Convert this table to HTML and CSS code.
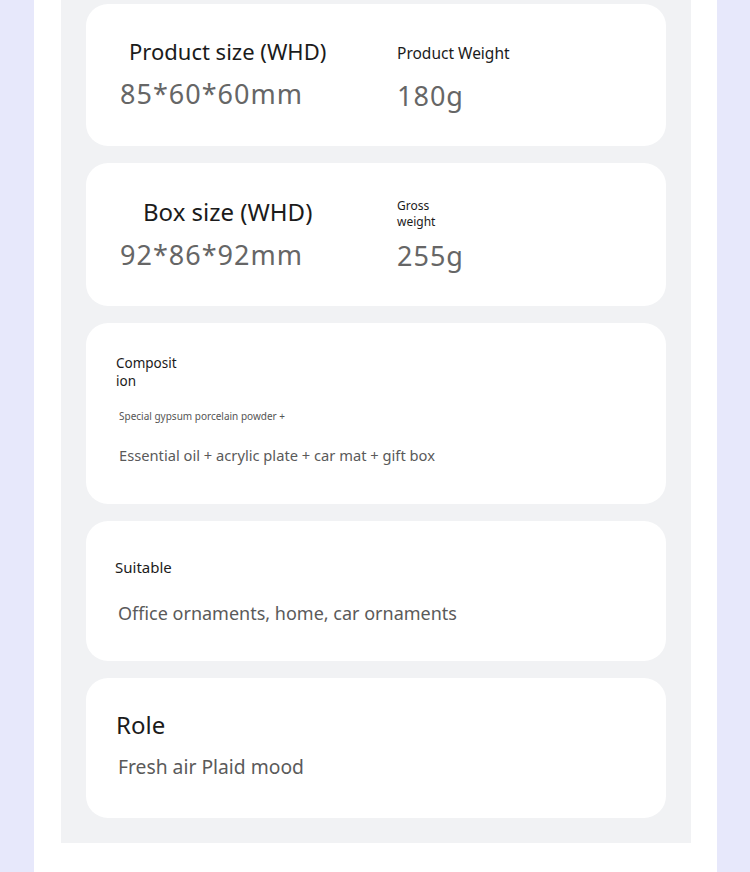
FILE: index.html
```html
<!DOCTYPE html>
<html lang="en">
<head>
    <meta charset="UTF-8">
    <title>Product details</title>
    <meta name="viewport" content="width=device-width, initial-scale=1">
    <link rel="stylesheet" href="styles.css">
</head>
<body>
<div class="page">
    <div class="panel">
        <section class="card card-size">
            <div class="col col-main">
                <h3 class="title title-product">Product size (WHD)</h3>
                <p class="value">85*60*60mm</p>
            </div>
            <div class="col col-side">
                <h4 class="label label-weight">Product Weight</h4>
                <p class="value value-weight">180g</p>
            </div>
        </section>

        <section class="card card-box">
            <div class="col col-main">
                <h3 class="title title-box">Box size (WHD)</h3>
                <p class="value">92*86*92mm</p>
            </div>
            <div class="col col-side">
                <h4 class="label label-gross">Gross<br>weight</h4>
                <p class="value value-gross">255g</p>
            </div>
        </section>

        <section class="card card-composition">
            <h4 class="label label-comp">Composit<br>ion</h4>
            <p class="note">Special gypsum porcelain powder +</p>
            <p class="text text-comp">Essential oil + acrylic plate + car mat + gift box</p>
        </section>

        <section class="card card-suitable">
            <h4 class="label label-suitable">Suitable</h4>
            <p class="text text-suitable">Office ornaments, home, car ornaments</p>
        </section>

        <section class="card card-role">
            <h3 class="title title-role">Role</h3>
            <p class="text text-role">Fresh air Plaid mood</p>
        </section>
    </div>
</div>
</body>
</html>
```

FILE: styles.css
```css
body {
    font-family: 'Noto Sans', 'Open Sans', sans-serif;
    background: #e7e8fb;
    color: #1b1b1b;
    margin: 0;
}
h3, h4, p {
    margin: 0;
    font-weight: 400;
}
.page {
    background: #ffffff;
    margin: 0 33px 0 34px;
    padding: 0 26px 40px 27px;
    min-height: 872px;
    box-sizing: border-box;
}
.panel {
    background: #f1f2f4;
    padding: 4px 25px 25px;
    display: flex;
    flex-direction: column;
    gap: 17px;
}
.card {
    background: #ffffff;
    border-radius: 22px;
    box-sizing: border-box;
    padding-left: 30px;
}
.card-size,
.card-box {
    display: grid;
    grid-template-columns: 277px 1fr;
    padding-left: 34px;
    height: 142px;
}
.card-box {
    height: 143px;
}
.card-composition {
    height: 181px;
}
.card-suitable {
    height: 140px;
}
.card-role {
    height: 140px;
}

/* titles */
.title {
    font-size: 24px;
    line-height: 30px;
}
.title-product {
    font-size: 22px;
    padding: 32px 0 0 9px;
}
.title-box {
    padding: 34px 0 0 23px;
}
.title-role {
    padding-top: 32px;
}

/* big numbers */
.value {
    font-size: 27px;
    line-height: 36px;
    letter-spacing: 1px;
    color: #666666;
    margin-top: 10px;
}
.value-weight {
    margin-top: 15px;
}
.value-gross {
    margin-top: 8px;
}

/* small labels */
.label {
    font-size: 15px;
    line-height: 20px;
}
.label-weight {
    font-size: 15.5px;
    padding-top: 39px;
}
.label-gross {
    font-size: 12px;
    line-height: 16px;
    padding-top: 35px;
}
.label-comp {
    font-size: 13.5px;
    line-height: 18px;
    padding-top: 31px;
}
.label-suitable {
    padding-top: 36px;
    margin-left: -1px;
}

.note {
    font-size: 10px;
    line-height: 14px;
    color: #555555;
    margin: 19px 0 0 3px;
}
.text {
    color: #5a5a5a;
    margin-left: 2px;
}
.text-comp {
    font-size: 14.7px;
    line-height: 20px;
    margin-top: 22px;
    margin-left: 3px;
}
.text-suitable {
    font-size: 18px;
    line-height: 24px;
    margin-top: 24px;
}
.text-role {
    font-size: 19.3px;
    line-height: 26px;
    margin-top: 14px;
}
```
